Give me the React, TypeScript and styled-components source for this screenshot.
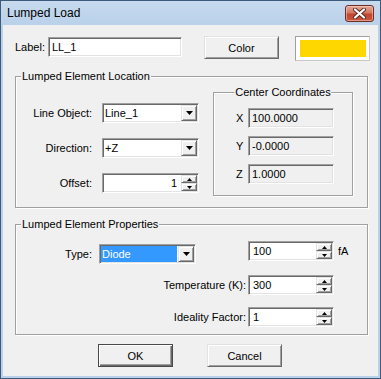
import React from 'react';
import styled, { createGlobalStyle, css } from 'styled-components';

const Global = createGlobalStyle`
  html, body { margin: 0; padding: 0; background: #fff; }
  body { font-family: "Liberation Sans", Arial, sans-serif; font-size: 11px; color: #000; }
  * { box-sizing: border-box; }
`;

const sunken = css`
  border: 1px solid;
  border-color: #a0a0a0 #ffffff #ffffff #a0a0a0;
  box-shadow: inset 1px 1px 0 #696969, inset -1px -1px 0 #e3e3e3;
`;

const raised = css`
  border: 1px solid;
  border-color: #e3e3e3 #696969 #696969 #e3e3e3;
  box-shadow: inset 1px 1px 0 #ffffff, inset -1px -1px 0 #a0a0a0;
  background: #f0f0f0;
`;

const Window = styled.div`
  width: 381px;
  height: 379px;
  border: 1px solid #3c5a7c;
  background: #b9d1ea;
  display: flex;
  flex-direction: column;
  padding: 0 2px 2px 2px;
`;

const TitleBar = styled.div`
  height: 24px;
  flex: none;
  display: flex;
  align-items: flex-start;
  justify-content: space-between;
  margin: 0 -2px;
  padding: 0 6px 0 6px;
  background: linear-gradient(#c7daee, #b9d1ea);
`;

const TitleText = styled.span`
  font-size: 12px;
  line-height: 24px;
  color: #000;
`;

const CloseButton = styled.div`
  margin-top: 4px;
  width: 29px;
  height: 17px;
  border: 1px solid #6b2d24;
  border-radius: 3px;
  background: linear-gradient(#e5a898 0%, #d47662 45%, #c1452f 55%, #c9563f 100%);
  box-shadow: inset 0 0 0 1px rgba(255, 220, 210, 0.5);
  display: flex;
  align-items: center;
  justify-content: center;
`;

const Client = styled.div`
  flex: 1;
  background: #f0f0f0;
  display: flex;
  flex-direction: column;
  padding: 11px 0 0 12px;
`;

const TopRow = styled.div`
  display: flex;
  align-items: flex-start;
  height: 25px;
`;

const FieldLabel = styled.span<{ $w: number; $top?: number; $mr?: number }>`
  width: ${(p) => p.$w}px;
  flex: none;
  height: 20px;
  line-height: 20px;
  margin-top: ${(p) => p.$top ?? 0}px;
  margin-right: ${(p) => p.$mr ?? 0}px;
  white-space: nowrap;
`;

const RightLabel = styled(FieldLabel)`
  text-align: right;
`;

const TextBox = styled.div<{ $w: number; $readonly?: boolean; $top?: number }>`
  ${sunken};
  width: ${(p) => p.$w}px;
  height: 20px;
  flex: none;
  margin-top: ${(p) => p.$top ?? 0}px;
  background: ${(p) => (p.$readonly ? '#f0f0f0' : '#ffffff')};
  padding: 0 3px;
  line-height: 18px;
  white-space: nowrap;
`;

const PushButton = styled.div<{ $default?: boolean; $ml?: number }>`
  ${raised};
  width: 75px;
  height: 23px;
  flex: none;
  margin-left: ${(p) => p.$ml ?? 0}px;
  display: flex;
  align-items: center;
  justify-content: center;
  ${(p) =>
    p.$default &&
    css`
      border: 1px solid #4a4a4a;
      box-shadow: inset 1px 1px 0 #ffffff, inset -1px -1px 0 #696969, inset -2px -2px 0 #a0a0a0;
    `}
`;

const Swatch = styled.div<{ $ml: number }>`
  width: 75px;
  height: 25px;
  flex: none;
  margin-left: ${(p) => p.$ml}px;
  border: 1px solid #a0a0a0;
  border-right-color: #c8c8c8;
  border-bottom-color: #c8c8c8;
  background: #ffffff;
  padding: 3px 3px 3px 4px;
`;

const SwatchFill = styled.div<{ $color: string }>`
  width: 100%;
  height: 100%;
  background: ${(p) => p.$color};
`;

const Group = styled.div<{ $w: number; $h: number; $mt?: number; $ml?: number }>`
  position: relative;
  flex: none;
  width: ${(p) => p.$w}px;
  height: ${(p) => p.$h}px;
  margin-top: ${(p) => p.$mt ?? 0}px;
  margin-left: ${(p) => p.$ml ?? 0}px;
  border: 1px solid #a0a0a0;
  box-shadow: inset 1px 1px 0 #ffffff, 1px 1px 0 #ffffff;
`;

const GroupTitle = styled.span<{ $center?: boolean }>`
  position: absolute;
  top: -7px;
  line-height: 13px;
  background: #f0f0f0;
  padding: 0 1px;
  white-space: nowrap;
  ${(p) =>
    p.$center
      ? css`
          left: 50%;
          transform: translateX(-50%);
        `
      : css`
          left: 5px;
        `}
`;

const LocationBody = styled.div`
  display: flex;
  align-items: flex-start;
`;

const LocationGrid = styled.div`
  margin-top: 26px;
  display: grid;
  grid-template-columns: 76px 97px;
  grid-auto-rows: 20px;
  column-gap: 10px;
  row-gap: 15px;
  align-items: center;
`;

const CoordGrid = styled.div`
  padding: 15px 0 0 22px;
  display: grid;
  grid-template-columns: 12px 86px;
  grid-auto-rows: 20px;
  row-gap: 8px;
  align-items: center;
`;

const ComboBox = styled.div<{ $w: number; $top?: number; $ml?: number }>`
  ${sunken};
  width: ${(p) => p.$w}px;
  height: 20px;
  flex: none;
  margin-top: ${(p) => p.$top ?? 0}px;
  margin-left: ${(p) => p.$ml ?? 0}px;
  background: #ffffff;
  padding: 1px;
  display: flex;
  align-items: stretch;
`;

const ComboText = styled.div<{ $selected?: boolean }>`
  flex: 1;
  margin-right: 1px;
  padding-left: 1px;
  line-height: 16px;
  white-space: nowrap;
  ${(p) =>
    p.$selected &&
    css`
      background: #3399ff;
      color: #ffffff;
    `}
`;

const DropButton = styled.div`
  ${raised};
  width: 16px;
  flex: none;
  display: flex;
  align-items: center;
  justify-content: center;
`;

const SpinBox = styled.div<{ $w: number; $ml?: number }>`
  ${sunken};
  width: ${(p) => p.$w}px;
  height: 20px;
  flex: none;
  margin-left: ${(p) => p.$ml ?? 0}px;
  background: #ffffff;
  padding: 1px;
  display: flex;
  align-items: stretch;
`;

const SpinText = styled.div<{ $align?: 'left' | 'right' }>`
  flex: 1;
  line-height: 16px;
  padding: ${(p) => (p.$align === 'right' ? '0 4px 0 0' : '0 0 0 3px')};
  text-align: ${(p) => p.$align ?? 'left'};
`;

const SpinButtons = styled.div`
  width: 16px;
  flex: none;
  display: flex;
  flex-direction: column;
`;

const SpinHalf = styled.div`
  ${raised};
  flex: 1;
  display: flex;
  align-items: center;
  justify-content: center;
`;

const PropsBody = styled.div`
  padding-top: 16px;
  display: flex;
  flex-direction: column;
`;

const PropRow = styled.div<{ $mt?: number }>`
  display: flex;
  align-items: flex-start;
  margin-top: ${(p) => p.$mt ?? 0}px;
`;

const Unit = styled.span`
  margin-left: 4px;
  line-height: 20px;
`;

const ButtonRow = styled.div`
  display: flex;
  margin-top: 9px;
  margin-left: 83px;
`;

const DownArrow = () => (
  <svg width="7" height="4" viewBox="0 0 7 4">
    <path d="M0 0H7L3.5 4Z" fill="#000" />
  </svg>
);

const TinyArrow = ({ up }: { up?: boolean }) => (
  <svg width="5" height="3" viewBox="0 0 5 3">
    <path d={up ? 'M2.5 0L5 3H0Z' : 'M0 0H5L2.5 3Z'} fill="#000" />
  </svg>
);

const Combo = ({
  value,
  w,
  top,
  ml,
  selected,
}: {
  value: string;
  w: number;
  top?: number;
  ml?: number;
  selected?: boolean;
}) => (
  <ComboBox $w={w} $top={top} $ml={ml}>
    <ComboText $selected={selected}>{value}</ComboText>
    <DropButton>
      <DownArrow />
    </DropButton>
  </ComboBox>
);

const Spin = ({ value, w, ml, align }: { value: string; w: number; ml?: number; align?: 'left' | 'right' }) => (
  <SpinBox $w={w} $ml={ml}>
    <SpinText $align={align}>{value}</SpinText>
    <SpinButtons>
      <SpinHalf>
        <TinyArrow up />
      </SpinHalf>
      <SpinHalf>
        <TinyArrow />
      </SpinHalf>
    </SpinButtons>
  </SpinBox>
);

export default function App() {
  return (
    <>
      <Global />
      <Window>
        <TitleBar>
          <TitleText>Lumped Load</TitleText>
          <CloseButton>
            <svg width="13" height="11" viewBox="0 0 13 11">
              <path
                d="M2 1.5L6.5 5.5L11 1.5M2 9.5L6.5 5.5L11 9.5"
                stroke="#5a2a22"
                strokeWidth="4"
                strokeLinecap="round"
                fill="none"
              />
              <path
                d="M2 1.5L6.5 5.5L11 1.5M2 9.5L6.5 5.5L11 9.5"
                stroke="#ffffff"
                strokeWidth="2.2"
                strokeLinecap="round"
                fill="none"
              />
            </svg>
          </CloseButton>
        </TitleBar>
        <Client>
          <TopRow>
            <FieldLabel $w={33} $top={1}>Label:</FieldLabel>
            <TextBox $w={134} $top={1}>LL_1</TextBox>
            <PushButton $ml={22}>Color</PushButton>
            <Swatch $ml={16}>
              <SwatchFill $color="#ffd700" />
            </Swatch>
          </TopRow>

          <Group $w={353} $h={132} $mt={15}>
            <GroupTitle>Lumped Element Location</GroupTitle>
            <LocationBody>
              <LocationGrid>
                <RightLabel $w={76}>Line Object:</RightLabel>
                <Combo value="Line_1" w={97} />
                <RightLabel $w={76}>Direction:</RightLabel>
                <Combo value="+Z" w={97} />
                <RightLabel $w={76}>Offset:</RightLabel>
                <Spin value="1" w={97} align="right" />
              </LocationGrid>
              <Group $w={140} $h={104} $mt={15} $ml={14}>
                <GroupTitle $center>Center Coordinates</GroupTitle>
                <CoordGrid>
                  <FieldLabel $w={12}>X</FieldLabel>
                  <TextBox $w={86} $readonly>100.0000</TextBox>
                  <FieldLabel $w={12}>Y</FieldLabel>
                  <TextBox $w={86} $readonly>-0.0000</TextBox>
                  <FieldLabel $w={12}>Z</FieldLabel>
                  <TextBox $w={86} $readonly>1.0000</TextBox>
                </CoordGrid>
              </Group>
            </LocationBody>
          </Group>

          <Group $w={353} $h={111} $mt={16}>
            <GroupTitle>Lumped Element Properties</GroupTitle>
            <PropsBody>
              <PropRow>
                <RightLabel $w={76} $top={3}>Type:</RightLabel>
                <Combo value="Diode" w={97} top={3} ml={7} selected />
                <Spin value="100" w={86} ml={52} />
                <Unit>fA</Unit>
              </PropRow>
              <PropRow $mt={11}>
                <RightLabel $w={230} $mr={2}>Temperature (K):</RightLabel>
                <Spin value="300" w={86} />
              </PropRow>
              <PropRow $mt={12}>
                <RightLabel $w={230} $mr={2}>Ideality Factor:</RightLabel>
                <Spin value="1" w={86} />
              </PropRow>
            </PropsBody>
          </Group>

          <ButtonRow>
            <PushButton $default>OK</PushButton>
            <PushButton $ml={34}>Cancel</PushButton>
          </ButtonRow>
        </Client>
      </Window>
    </>
  );
}
